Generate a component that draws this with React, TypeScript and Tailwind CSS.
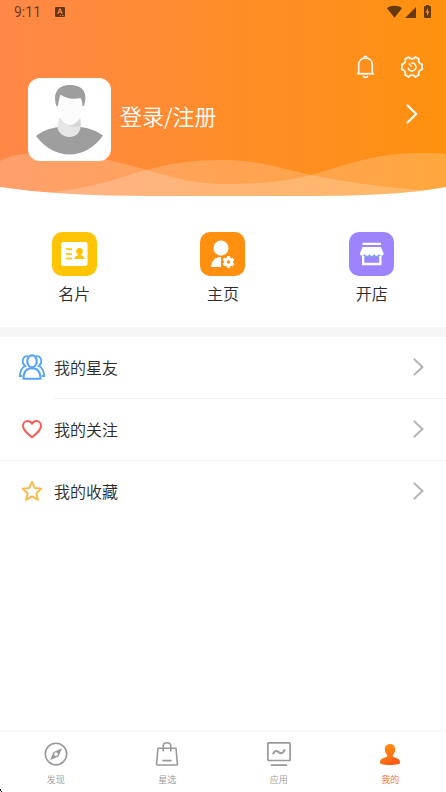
import type { ReactNode } from 'react';

const StatusBar = () => (
  <div className="flex h-6 items-center justify-between pl-3.5 pr-3.5 text-black/60">
    <div className="flex items-center gap-3.5">
      <span className="font-['Roboto',sans-serif] text-sm leading-6 font-normal">9:11</span>
      <svg className="h-2.5 w-2.5" viewBox="0 0 10 10">
        <path
          fill="currentColor"
          fillRule="evenodd"
          d="M1 0h8a1 1 0 0 1 1 1v8a1 1 0 0 1-1 1H1a1 1 0 0 1-1-1V1a1 1 0 0 1 1-1zM4.300 1.500L2.300 6.800h1.200l.4-1h2.200l.4 1h1.200L5.700 1.500zM5 3l.7 1.700H4.300zM5 8h1v.7H5zM7 8h1.500v.7H7z"
        />
      </svg>
    </div>
    <svg className="h-4 w-[46px]" viewBox="0 0 46 16" fill="currentColor">
      <path d="M1 4.200C5 1 12 1 16 4.200L8.500 13.700z" />
      <path d="M30 3v11H19z" />
      <path
        fillRule="evenodd"
        d="M40 1h3v1h1a1 1 0 0 1 1 1v10a1 1 0 0 1-1 1h-5a1 1 0 0 1-1-1V3a1 1 0 0 1 1-1h1zM42 4l-2.500 4.500h1.500V12l2.500-4.500H42z"
      />
    </svg>
  </div>
);

const HeaderWaves = () => (
  <svg
    className="absolute inset-x-0 bottom-0 h-12 w-full"
    viewBox="0 0 446 48"
    preserveAspectRatio="none"
    aria-hidden="true"
  >
    <path
      fill="#fff"
      fillOpacity="0.2"
      d="M0 13C12 6 28 5 45 5C80 5 115 12 147 22C177 31 200 36 224 36C258 36 284 34 311 27C340 20 368 5 420 5C432 5 440 5 446 6V48H0z"
    />
    <path
      fill="#fff"
      fillOpacity="0.2"
      d="M0 47C55 46 85 40 110 33C130 27 138 24 147 22C170 15 195 12 224 12C258 12 280 20 311 27C346 34 375 38 420 42L446 44V48H0z"
    />
    <path fill="#fff" d="M0 39C40 45 90 48 150 48H0z" />
    <path fill="#fff" d="M446 39C415 45 370 48 310 48H446z" />
  </svg>
);

const Bell = () => (
  <svg className="h-6 w-5" viewBox="0 0 20 24" fill="none" stroke="#fff" strokeWidth="1.500">
    <path d="M2.700 18.500V9.800C2.700 5.400 5.600 2.900 9.500 2.900s6.800 2.500 6.800 6.900v8.700" />
    <path d="M1 18.700h17" strokeWidth="1.700" />
    <path d="M8.200 2.600a1.300 1.300 0 0 1 2.600 0" />
    <path d="M7.300 20.600c.3 1.600 1.200 1.900 2.200 1.900s1.900-.3 2.200-1.900" />
  </svg>
);

const Gear = () => (
  <svg className="h-[22px] w-[22px]" viewBox="1 1 22 22" fill="none" stroke="#fff" strokeWidth="1.700" strokeLinejoin="round" strokeLinecap="round">
    <path d="M8.600 2.100C9.500 3.400 10.800 3.900 12 3.900s2.500-.5 3.400-1.800l3.400 1.900c-.5 1.700-.1 2.900.6 3.900.6.900 1.500 1.400 2.700 1.500v5.200c-1.200.1-2.100.6-2.700 1.500-.7 1-1.100 2.200-.6 3.900l-3.400 1.900c-.9-1.300-2.200-1.800-3.400-1.800s-2.500.5-3.400 1.800L5.200 20c.5-1.700.1-2.900-.6-3.900-.6-.9-1.500-1.400-2.700-1.500V9.400c1.200-.1 2.100-.6 2.700-1.500.7-1 1.100-2.200.6-3.900z" />
    <path d="M8.300 13.200a3.900 3.900 0 1 0 3.200-5.100" strokeWidth="1.400" />
    <path d="M9.200 9l2.200 2.300" strokeWidth="1.200" />
  </svg>
);

const Avatar = () => (
  <svg className="h-[83px] w-[83px]" viewBox="0 0 83 83" role="img" aria-label="头像">
    <path fill="#9e9e9e" d="M8 58C14 53 22 50 31 49h21c9 1 17 4 23 8.500C66 70 54 76.500 41.500 76.500S17 70 8 58z" />
    <path fill="#e6e6e6" d="M31 40h21.500v10c-1 5-5 9-11 9s-11-4-12-9z" />
    <path fill="#d6d6d6" d="M36 45c5 3 10 4 16.500 4v-7L47 43z" />
    <path fill="#fcfcfc" d="M29.500 17h25L55 29c0 3-1 4-2 5-1 7-5 13-11 13S32 41 31 34c-2-1-3-4-3-7z" />
    <path fill="#9e9e9e" d="M28.500 28C25 17 28 7 42 7s18 9 14 21h-1.500c0-3-.5-5-2-8C44 22 37 20 32.500 16.500c-1 3-2 7-2.500 11.500z" />
  </svg>
);

const Chevron = ({ className }: { className: string }) => (
  <svg className={className} viewBox="0 0 12 20" fill="none" stroke="currentColor" preserveAspectRatio="none">
    <path d="M1.500 1.500L10.300 10L1.500 18.500" strokeWidth="2.200" strokeLinecap="round" strokeLinejoin="round" />
  </svg>
);

const CardIcon = () => (
  <svg className="h-11 w-[45px]" viewBox="0 0 45 44">
    <rect x="9" y="10" width="26.500" height="24" rx="2.500" fill="#fff" />
    <g fill="#ffc505">
      <rect x="14" y="16.300" width="6" height="1.700" />
      <rect x="14" y="21.300" width="6" height="1.700" />
      <rect x="14" y="25.700" width="6" height="1.700" />
      <circle cx="27.500" cy="19.200" r="3.300" />
      <path d="M25.700 21h3.600v2.500c2 .5 3.200 1 3.200 3.500h-10c0-2.500 1.200-3 3.200-3.500z" />
    </g>
  </svg>
);

const HomeIcon = () => (
  <svg className="h-11 w-[45px]" viewBox="0 0 45 44">
    <circle cx="21" cy="16" r="7.600" fill="#fff" />
    <path fill="#fff" d="M21 25v10H11c.2-6 4-10 10-10z" />
    <g transform="translate(28.500 30)">
      <g fill="#fff">
        <circle r="4.500" />
        <rect x="-1.700" y="-6" width="3.400" height="12" rx=".8" />
        <rect x="-1.700" y="-6" width="3.400" height="12" rx=".8" transform="rotate(60)" />
        <rect x="-1.700" y="-6" width="3.400" height="12" rx=".8" transform="rotate(120)" />
      </g>
      <circle r="1.700" fill="#ff8f0f" />
    </g>
  </svg>
);

const ShopIcon = () => (
  <svg className="h-11 w-[45px]" viewBox="0 0 45 44">
    <path fill="#7fa0e8" d="M13.500 22h19v3.500h-19z" />
    <rect x="13.500" y="10.800" width="18.500" height="2.200" rx=".6" fill="#fff" />
    <path
      fill="#fff"
      d="M13.500 15h18.500l2.700 6.500a2.400 2.400 0 0 1-4.700.6 2.500 2.500 0 0 1-4.800 0 2.500 2.500 0 0 1-4.800 0 2.500 2.500 0 0 1-4.800 0 2.400 2.400 0 0 1-4.700-.6z"
    />
    <path fill="#fff" d="M13 24h2.300v6.800h14.900V24h2.300v9.200H13z" />
  </svg>
);

const FriendsIcon = () => (
  <svg className="h-7 w-7" viewBox="0 0 28 28" fill="none" stroke="#56a3fb" strokeWidth="1.800">
    <path d="M5.500 25.700c0-7 3-10.500 8.500-10.500s8.500 3.500 8.500 10.500z" strokeWidth="2.100" strokeLinejoin="round" />
    <ellipse cx="14" cy="8.400" rx="4.700" ry="6" strokeWidth="2.100" />
    <path d="M10 3.200C6.500 2.700 4.700 5 4.700 8c0 2.500 1 4 2.500 5-3.500 1.500-5 5-5.500 10h2.500" />
    <path d="M18 3.200c3.500-.5 5.300 1.800 5.300 4.800 0 2.500-1 4-2.500 5 3.500 1.500 5 5 5.500 10h-2.500" />
  </svg>
);

const HeartIcon = () => (
  <svg className="h-7 w-7" viewBox="0 0 28 28" fill="none" stroke="#fa5c55" strokeWidth="2" strokeLinejoin="round">
    <path d="M14 22.300C9 18.300 5 15 5 11c0-3 2-5 4.600-5 2 0 3.400 1 4.400 2.800C15 7 16.500 6 18.500 6 21 6 23 8 23 11c0 4-4 7.300-9 11.300z" />
  </svg>
);

const StarIcon = () => (
  <svg className="h-7 w-7" viewBox="0 0 28 28" fill="none" stroke="#fdb94c" strokeWidth="1.900" strokeLinejoin="round">
    <path d="M14 4.800l2.700 6.200 6.800.6-5.100 4.600 1.500 6.700-5.900-3.500-5.900 3.500 1.500-6.700-5.100-4.600 6.800-.6z" />
  </svg>
);

const CompassIcon = () => (
  <svg className="h-6 w-6" viewBox="0 0 24 24" fill="none" stroke="#999">
    <circle cx="12" cy="12" r="10.700" strokeWidth="1.600" />
    <path fill="#999" fillRule="evenodd" stroke="none" d="M18 6.300L14.500 14.500 6.200 17.900 9.500 9.900zM12 10.200a1.900 1.900 0 1 0 0 3.800 1.900 1.900 0 0 0 0-3.800z" />
  </svg>
);

const BagIcon = () => (
  <svg className="h-6 w-6" viewBox="0 0 24 24" fill="none" stroke="#999" strokeWidth="1.600" strokeLinecap="round" strokeLinejoin="round">
    <path d="M3 6.200h18l1.400 15.500c.1.900-.3 1.300-1.200 1.300H2.800c-.9 0-1.300-.4-1.200-1.300z" />
    <path d="M8.200 9V4.200C8.200 2 9.800.8 12 .8s3.800 1.200 3.800 3.400V9" />
    <path d="M8 18.600h8" />
  </svg>
);

const ScreenIcon = () => (
  <svg className="h-6 w-6" viewBox="0 0 24 24" fill="none" stroke="#999" strokeWidth="1.700" strokeLinecap="round" strokeLinejoin="round">
    <rect x=".9" y=".9" width="22.200" height="17.600" rx=".8" />
    <path d="M6.200 11.500C8 8.500 9.500 8.300 11.500 10c2.200 1.800 4 2.300 6-2" strokeWidth="2" />
    <path d="M4.500 23.100h15" />
  </svg>
);

const MeIcon = () => (
  <svg className="h-6 w-6" viewBox="0 0 24 24">
    <defs>
      <linearGradient id="me" x1="0" y1="0" x2="0.500" y2="1">
        <stop offset="0" stopColor="#ff9a10" />
        <stop offset="1" stopColor="#ff5c17" />
      </linearGradient>
    </defs>
    <path
      fill="url(#me)"
      d="M12 2c3.400 0 5.200 2.300 5.200 5.300 0 2.700-1.200 4.500-2.300 5.700-.5 1.200.2 1.800 1.500 2.200 3.900 1.100 5.700 2.500 5.700 5.300 0 1.500-3 2.500-10.100 2.500S1.900 22 1.900 20.500c0-2.800 1.800-4.200 5.700-5.300 1.300-.4 2-1 1.500-2.200C8 11.800 6.800 10 6.800 7.300 6.800 4.300 8.600 2 12 2z"
    />
  </svg>
);

const shortcuts = [
  { label: '名片', icon: <CardIcon />, color: 'bg-[#ffc505]' },
  { label: '主页', icon: <HomeIcon />, color: 'bg-[#ff8f0f]' },
  { label: '开店', icon: <ShopIcon />, color: 'bg-[#9d84fe]' },
];

const tabs = [
  { label: '发现', icon: <CompassIcon /> },
  { label: '星选', icon: <BagIcon /> },
  { label: '应用', icon: <ScreenIcon /> },
  { label: '我的', icon: <MeIcon />, active: true },
];

function MenuRow({ icon, label, divider }: { icon: ReactNode; label: string; divider?: string }) {
  return (
    <li>
      <button className="flex h-[62px] w-full items-center pb-0.5 pl-[18px] pr-[22px] text-left">
        {icon}
        <span className="ml-2 flex-1 text-base">{label}</span>
        <Chevron className="h-[18px] w-[11px] text-[#b3b3b3]" />
      </button>
      {divider && <div className={`-mt-px h-px bg-[#f1f1f1] ${divider}`} />}
    </li>
  );
}

export default function App() {
  return (
    <div className="flex min-h-screen flex-col bg-white font-['Noto_Sans_CJK_SC',sans-serif] font-[350] text-[#2b2b2b]">
      <header className="relative bg-linear-to-r from-[#ff8848] via-[#ff8d28] to-[#ff910c] pb-[35px]">
        <HeaderWaves />
        <StatusBar />
        <div className="relative mt-8 flex h-[22px] items-center justify-end gap-[25px] pr-[23px]">
          <button aria-label="消息">
            <Bell />
          </button>
          <button aria-label="设置">
            <Gear />
          </button>
        </div>
        <button className="relative flex w-full items-center pl-7 pr-7 text-left text-white">
          <span className="overflow-hidden rounded-xl bg-white">
            <Avatar />
          </span>
          <span className="ml-[9px] flex-1 pb-2.5 text-[22px] leading-8">登录/注册</span>
          <span className="pb-3">
            <Chevron className="h-5 w-3" />
          </span>
        </button>
      </header>

      <main>
        <div className="grid grid-cols-3 pt-9 pb-[22px]">
          {shortcuts.map((item) => (
            <button key={item.label} className="flex flex-col items-center gap-[5px]">
              <span className={`rounded-[10px] ${item.color}`}>{item.icon}</span>
              <span className="text-base leading-6">{item.label}</span>
            </button>
          ))}
        </div>
        <div className="h-[10px] bg-[#f5f5f5]" />
        <ul>
          <MenuRow icon={<FriendsIcon />} label="我的星友" divider="ml-[54px]" />
          <MenuRow icon={<HeartIcon />} label="我的关注" divider="ml-0" />
          <MenuRow icon={<StarIcon />} label="我的收藏" />
        </ul>
      </main>

      <nav className="relative mt-auto grid grid-cols-4 pt-2.5 pb-1.5 shadow-[0_-1px_4px_rgba(0,0,0,0.06)]">
        {tabs.map((tab) => (
          <a key={tab.label} href="#" className="flex flex-col items-center gap-2">
            {tab.icon}
            <span className={`text-[9px] leading-3 ${tab.active ? 'text-[#ff6a1a]' : 'text-[#999]'}`}>{tab.label}</span>
          </a>
        ))}
        <svg className="absolute bottom-0 left-0 h-[3px] w-0.5" viewBox="0 0 2 3" aria-hidden="true">
          <path d="M0 0h1v2h1v1H1V2H0z" />
        </svg>
      </nav>
    </div>
  );
}
